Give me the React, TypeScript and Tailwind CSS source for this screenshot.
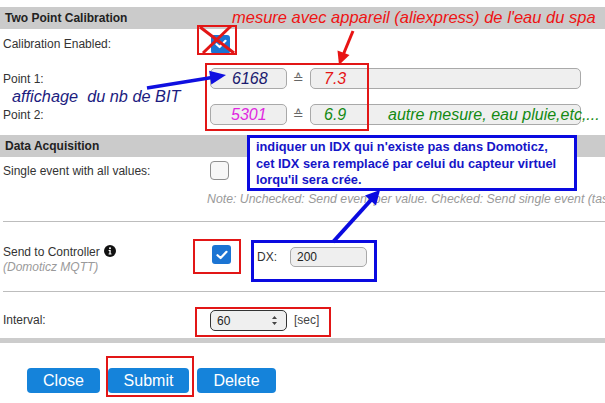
import React from "react";

const font = { fontFamily: '"Liberation Sans", Arial, sans-serif' };

const Checkbox: React.FC<{ checked?: boolean }> = ({ checked }) =>
  checked ? (
    <div className="flex h-[19px] w-[19px] items-center justify-center rounded-[3px] bg-[#1b74d3]">
      <svg width="12" height="10" viewBox="0 0 12 10">
        <path d="M1.5 5.2 L4.6 8 L10.5 1.8" fill="none" stroke="#fff" strokeWidth="2.2" strokeLinecap="round" strokeLinejoin="round" />
      </svg>
    </div>
  ) : (
    <div className="h-[19px] w-[19px] rounded-[4px] border border-[#8f8f8f] bg-[#f7f7f7]" />
  );

const ValueBox: React.FC<{ className?: string; children?: React.ReactNode }> = ({ className, children }) => (
  <div
    className={
      "flex h-[21px] items-center rounded-[5px] border border-[#a9a9a9] bg-[#efefef] text-[16px] italic " +
      (className ?? "")
    }
  >
    {children}
  </div>
);

const SectionHeader: React.FC<{ title: string }> = ({ title }) => (
  <div className="flex h-[22px] items-center bg-[#cbcbcb] pl-[5px] text-[12px] font-bold text-[#222]">{title}</div>
);

const InfoIcon = () => (
  <svg width="12" height="12" viewBox="0 0 12 12" className="ml-[4px] inline-block align-[-1px]">
    <circle cx="6" cy="6" r="6" fill="#111" />
    <circle cx="6" cy="3.2" r="1" fill="#fff" />
    <path d="M4.6 5 H6.7 V8.6 H7.5 V9.5 H4.6 V8.6 H5.4 V5.9 H4.6 Z" fill="#fff" />
  </svg>
);

export default function App() {
  return (
    <div className="relative h-[403px] w-[605px] overflow-hidden bg-white text-[12px] text-[#333]" style={font}>
      {/* form */}
      <div className="h-[7px]" />
      <SectionHeader title="Two Point Calibration" />

      <div className="flex h-[30px] items-center">
        <div className="w-[211px] pl-[3px]">Calibration Enabled:</div>
        <Checkbox checked />
      </div>

      <div className="flex h-[39px] items-center">
        <div className="w-[210px] pl-[3px]">Point 1:</div>
        <ValueBox className="w-[77px] pl-[21px] text-[#1a1a6e]">6168</ValueBox>
        <span className="w-[23px] text-center text-[13px] text-[#666]" style={{ fontFamily: '"DejaVu Sans", sans-serif' }}>≙</span>
        <ValueBox className="w-[271px] pl-[13px] text-[#e51515]">7.3</ValueBox>
      </div>

      <div className="flex h-[33px] items-center">
        <div className="w-[210px] pl-[3px]">Point 2:</div>
        <ValueBox className="w-[77px] pl-[20px] text-[#e028e0]">5301</ValueBox>
        <span className="w-[23px] text-center text-[13px] text-[#666]" style={{ fontFamily: '"DejaVu Sans", sans-serif' }}>≙</span>
        <ValueBox className="w-[271px] pl-[13px] text-[#138a13]">6.9</ValueBox>
      </div>

      <div className="h-[4px]" />
      <SectionHeader title="Data Acquisition" />

      <div className="flex h-[27px] items-center">
        <div className="w-[210px] pl-[3px]">Single event with all values:</div>
        <Checkbox />
      </div>
      <div className="flex h-[30px] items-center whitespace-nowrap pl-[207px] text-[12.3px] italic text-[#9a9a9a]">
        Note: Unchecked: Send event per value. Checked: Send single event (taskname#All) with all values.
      </div>
      <div className="h-[7px]" />
      <div className="ml-[3px] h-px bg-[#bdbdbd]" />

      <div className="flex h-[69px] items-start pt-[23px]">
        <div className="w-[212px] pl-[3px] leading-[15px]">
          <div>
            Send to Controller
            <InfoIcon />
          </div>
          <div className="italic text-[#9a9a9a]">(Domoticz MQTT)</div>
        </div>
        <Checkbox checked />
        <div className="ml-[26px] mt-[2px] flex items-center">
          <span className="w-[33px]">DX:</span>
          <div className="flex h-[20px] w-[77px] items-center rounded-[5px] border border-[#a9a9a9] bg-[#efefef] pl-[6px] text-[12px] text-[#222]">
            200
          </div>
        </div>
      </div>
      <div className="ml-[3px] h-px bg-[#bdbdbd]" />

      <div className="flex h-[46px] items-start pt-[18px]">
        <div className="w-[210px] pl-[3px] leading-[20px]">Interval:</div>
        <div className="flex h-[21px] w-[77px] items-center justify-between rounded-[5px] border-[1.5px] border-[#333] bg-[#efefef] pl-[6px] pr-[8px] text-[#222]">
          <span>60</span>
          <svg width="7" height="11" viewBox="0 0 7 11">
            <path d="M1 4 L3.5 1 L6 4 Z M1 7 L3.5 10 L6 7 Z" fill="#444" />
          </svg>
        </div>
        <span className="ml-[7px] leading-[20px] text-[#444]">[sec]</span>
      </div>
      <div className="h-[5px] bg-[#cccccc]" />

      <div className="flex gap-[8px] pl-[27px] pt-[25px]">
        <button className="h-[25px] w-[73px] rounded-[4px] bg-[#1583da] text-[16px] text-white">Close</button>
        <button className="h-[25px] w-[81px] rounded-[4px] bg-[#1583da] text-[16px] text-white">Submit</button>
        <button className="h-[25px] w-[79px] rounded-[4px] bg-[#1583da] text-[16px] text-white">Delete</button>
      </div>

      {/* annotations */}
      <div className="absolute left-[232px] top-[7px] whitespace-nowrap text-[16.5px] leading-[20px] italic text-[#ee1414]">
        mesure avec appareil (aliexpress) de l'eau du spa
      </div>
      <div className="absolute left-[12px] top-[86px] whitespace-nowrap text-[16.3px] leading-[20px] italic text-[#1c1c80]">
        affichage&nbsp; du nb de BIT
      </div>
      <div className="absolute left-[388px] top-[105px] whitespace-nowrap text-[16px] leading-[20px] italic text-[#138a13]">
        autre mesure, eau pluie,etc,...
      </div>

      <div className="absolute left-[197px] top-[25px] h-[30px] w-[40px] border-2 border-[#e21616]" />
      <div className="absolute left-[205px] top-[63px] h-[68px] w-[164px] border-2 border-[#e21616]" />
      <div className="absolute left-[193px] top-[239px] h-[35px] w-[48px] border-2 border-[#e21616]" />
      <div className="absolute left-[195px] top-[307px] h-[30px] w-[136px] border-2 border-[#e21616]" />
      <div className="absolute left-[106px] top-[356px] h-[41px] w-[88px] border-2 border-[#e21616]" />

      <div className="absolute left-[251px] top-[240px] h-[42px] w-[126px] border-[3px] border-[#0a0ae0]" />
      <div className="absolute left-[247px] top-[135px] h-[56px] w-[330px] whitespace-nowrap border-[3px] border-[#0a0ae0] bg-white pl-[6px] pt-[1px] text-[12.8px] font-bold leading-[16.5px] text-[#1515c8]">
        <div>indiquer un IDX qui n'existe pas dans Domoticz,</div>
        <div>cet IDX sera remplacé par celui du capteur virtuel</div>
        <div>lorqu'il sera crée.</div>
      </div>

      <svg className="pointer-events-none absolute left-0 top-0" width="605" height="403">
        <line x1="200" y1="27" x2="234" y2="53" stroke="#e21616" strokeWidth="3" />
        <line x1="231" y1="26" x2="203" y2="53" stroke="#e21616" strokeWidth="3" />
        <line x1="353" y1="31" x2="343.5" y2="54" stroke="#e81414" strokeWidth="3" />
        <polygon points="339,65 349.5,55 337.5,50.5" fill="#e81414" />
        <line x1="147" y1="88" x2="212" y2="77.5" stroke="#1010e0" strokeWidth="3.5" />
        <polygon points="226,75 211.3,84.5 209.1,70.7" fill="#1010e0" />
        <line x1="333" y1="242" x2="371" y2="200" stroke="#0a0ae0" strokeWidth="4" />
        <polygon points="380,190 376,205.5 365,195.5" fill="#0a0ae0" />
      </svg>
    </div>
  );
}
